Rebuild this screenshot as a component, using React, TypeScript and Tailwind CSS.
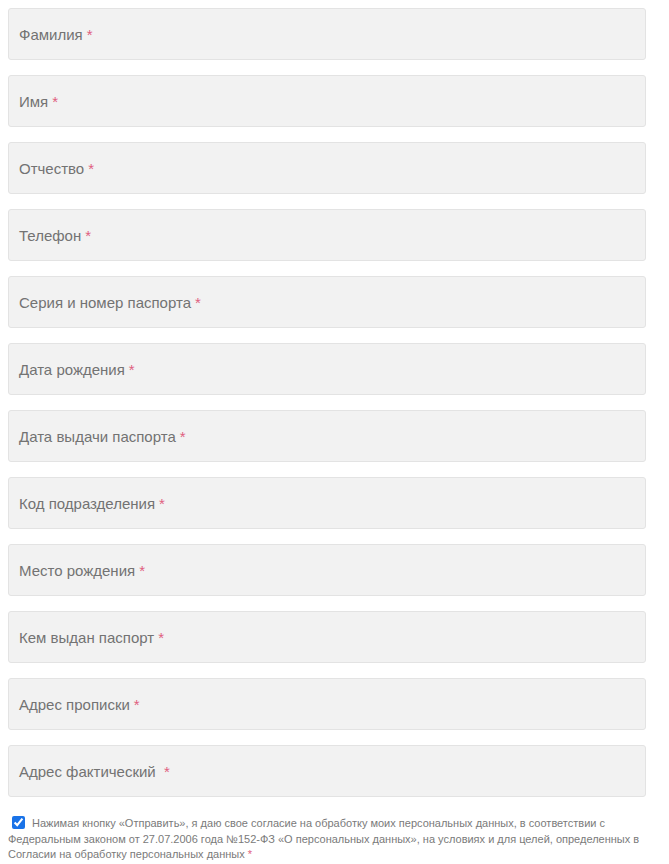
const fields = [
  "Фамилия",
  "Имя",
  "Отчество",
  "Телефон",
  "Серия и номер паспорта",
  "Дата рождения",
  "Дата выдачи паспорта",
  "Код подразделения",
  "Место рождения",
  "Кем выдан паспорт",
  "Адрес прописки",
  "Адрес фактический ",
];

export default function App() {
  return (
    <div className="min-h-[864px] bg-white pt-2 pl-2 font-['Liberation_Sans',Arial,sans-serif]">
      <div className="flex w-[638px] flex-col gap-[15px]">
        {fields.map((f) => (
          <div
            key={f}
            className="flex h-[52px] items-center rounded-[3px] border border-[#e3e3e3] bg-[#f2f2f2] pl-[10px] pt-[3px] text-[15px] text-[#737373]"
          >
            <span className="whitespace-pre">{f}</span>
            <span className="ml-[4px] text-[#e0607e]">*</span>
          </div>
        ))}
      </div>

      <p className="mt-[19px] w-[640px] text-[11px] leading-[15.5px] text-[#7a7a7a]">
        <input
          type="checkbox"
          defaultChecked
          className="mr-[7px] ml-[4px] h-[13px] w-[13px] align-[-2px] accent-[#1a73e8]"
        />
        Нажимая кнопку «Отправить», я даю свое согласие на обработку моих
        персональных данных, в соответствии с Федеральным законом от 27.07.2006
        года №152-ФЗ «О персональных данных», на условиях и для целей,
        определенных в Согласии на обработку персональных данных{" "}
        <span className="text-[#e0607e]">*</span>
      </p>
    </div>
  );
}
